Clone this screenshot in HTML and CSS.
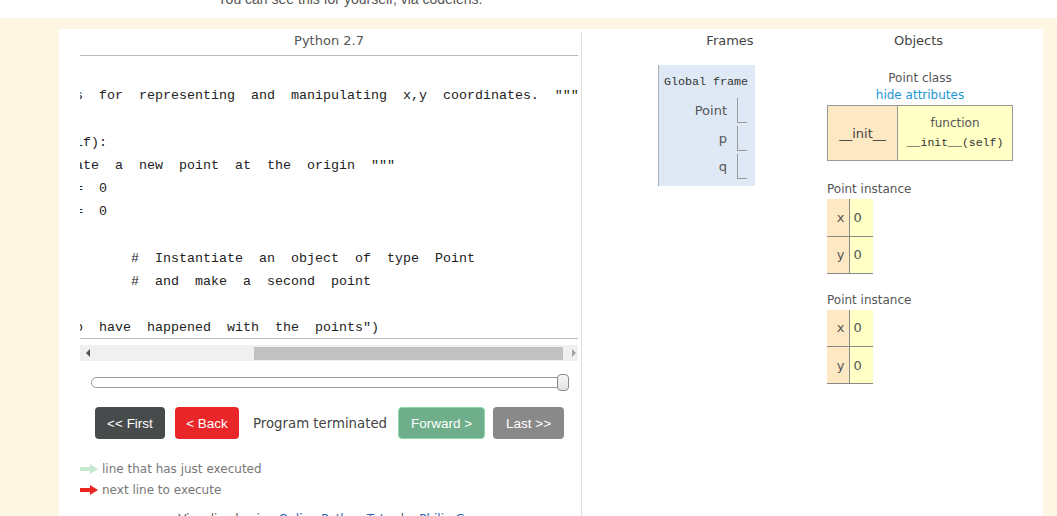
FILE: index.html
```html
<!DOCTYPE html>
<html>
<head>
<meta charset="utf-8">
<link rel="stylesheet" href="styles.css">
</head>
<body>
<div class="intro"><p>You can see this for yourself, via codelens.</p></div>
<div class="page">
  <div class="code-pane">
    <div class="lang">Python 2.7</div>
    <div class="code"><pre>class Point:
    """ Point class for representing and manipulating x,y coordinates. """

    def __init__(self):
        """ Create a new point at the origin """
        self.x = 0
        self.y = 0

p = Point()         # Instantiate an object of type Point
q = Point()         # and make a second point

print("Nothing seems to have happened with the points")</pre></div>
    <div class="hscroll"><span class="arr-l"></span><span class="thumb"></span><span class="arr-r"></span></div>
    <div class="slider"><div class="track"></div><div class="handle"></div></div>
    <div class="controls">
      <span class="btn first">&lt;&lt; First</span>
      <span class="btn back">&lt; Back</span>
      <span class="status">Program terminated</span>
      <span class="btn forward">Forward &gt;</span>
      <span class="btn last">Last &gt;&gt;</span>
    </div>
    <div class="legend">
      <div class="legend-row"><svg width="18" height="10" viewBox="0 0 18 10"><rect x="0" y="3" width="11" height="4" fill="#c3e8cf"/><polygon points="10,0 18,5 10,10" fill="#c3e8cf"/></svg><span>line that has just executed</span></div>
      <div class="legend-row"><svg width="18" height="10" viewBox="0 0 18 10"><rect x="0" y="3" width="11" height="4" fill="#e9261f"/><polygon points="10,0 18,5 10,10" fill="#e9261f"/></svg><span>next line to execute</span></div>
    </div>
    <div class="footer">Visualized using <a href="#">Online Python Tutor</a> by <a href="#">Philip Guo</a></div>
  </div>
  <div class="data-pane">
    <div class="stack">
      <div class="col-head">Frames</div>
      <div class="frame">
        <div class="frame-title">Global frame</div>
        <div class="vars">
          <div class="vname">Point</div><div class="vval"></div>
          <div class="vname">p</div><div class="vval"></div>
          <div class="vname">q</div><div class="vval"></div>
        </div>
      </div>
    </div>
    <div class="heap">
      <div class="col-head">Objects</div>
      <div class="obj-label class-label">Point class</div>
      <a class="hide" href="#">hide attributes</a>
      <table class="class-tbl">
        <tr><td class="ckey">__init__</td><td class="cval"><div class="fn">function</div><div class="sig">__init__(self)</div></td></tr>
      </table>
      <div class="obj-label inst-label">Point instance</div>
      <table class="inst-tbl">
        <tr><td class="ikey">x</td><td class="ival">0</td></tr>
        <tr><td class="ikey">y</td><td class="ival">0</td></tr>
      </table>
      <div class="obj-label inst-label second">Point instance</div>
      <table class="inst-tbl">
        <tr><td class="ikey">x</td><td class="ival">0</td></tr>
        <tr><td class="ikey">y</td><td class="ival">0</td></tr>
      </table>
    </div>
  </div>
</div>
</body>
</html>
```

FILE: styles.css
```css
* { box-sizing: border-box; }

body {
  margin: 0;
  background: #fdf6e3;
  font-family: "DejaVu Sans", sans-serif;
  color: #444;
  height: 516px;
  overflow: hidden;
}

.intro {
  height: 18px;
  background: #fff;
  overflow: hidden;
}

.intro p {
  width: 700px;
  margin: -9px 0 0;
  text-align: center;
  font: 14px/16px "Liberation Sans", Arial, sans-serif;
  color: #555;
}

.page {
  margin: 11px 14px 0 59px;
  background: #fff;
  height: 487px;
  display: flex;
  overflow: hidden;
}

/* ---------- code pane ---------- */
.code-pane {
  width: 523px;
  margin-top: 4px;
  padding: 0 3px 0 21px;
  border-right: 1px solid #ddd;
}

.lang {
  height: 23px;
  padding-top: 1px;
  line-height: 14px;
  text-align: center;
  font-size: 13px;
  color: #555;
  border-bottom: 1px solid #bbb;
}

.code {
  height: 283px;
  padding-top: 5px;
  border-bottom: 1px solid #bbb;
  overflow: hidden;
}

.code pre {
  margin: 0;
  font: 13.333px/23.2px "Liberation Mono", monospace;
  word-spacing: 8px;
  color: #222;
  transform: translateX(-197px);
}

.hscroll {
  margin-top: 6px;
  height: 16px;
  background: #f0f0f0;
  display: flex;
  align-items: center;
  padding-left: 6px;
}

.arr-l {
  width: 0;
  height: 0;
  border-right: 4px solid #505050;
  border-top: 4px solid transparent;
  border-bottom: 4px solid transparent;
}

.thumb {
  margin-left: 164px;
  width: 309px;
  height: 13px;
  background: #c1c1c1;
}

.arr-r {
  margin-left: 9px;
  width: 0;
  height: 0;
  border-left: 4px solid #a3a3a3;
  border-top: 4px solid transparent;
  border-bottom: 4px solid transparent;
}

.slider {
  margin-top: 13px;
  height: 17px;
  position: relative;
  padding-top: 3px;
}

.track {
  margin-left: 11px;
  width: 477px;
  height: 11px;
  border: 1px solid #9a9a9a;
  border-radius: 6px;
  background: #fff;
}

.handle {
  position: absolute;
  left: 477px;
  top: 0;
  width: 12px;
  height: 17px;
  border: 1px solid #8a8a8a;
  border-radius: 4px;
  background: linear-gradient(#f6f6f6, #e2e2e2);
}

.controls {
  margin-top: 16px;
  height: 32px;
  display: flex;
  align-items: center;
  padding-left: 15px;
}

.btn {
  height: 32px;
  border-radius: 4px;
  color: #fff;
  font: 13.5px "Liberation Sans", Arial, sans-serif;
  display: flex;
  align-items: center;
  justify-content: center;
}

.first { width: 70px; background: #474b4c; }
.back { width: 64px; margin-left: 10px; background: #e9272a; }
.status { margin-left: 14px; font-size: 13.3px; color: #444; }
.forward { width: 87px; margin-left: 11px; background: #6fae8a; border: 1px solid #8fd8ab; }
.last { width: 71px; margin-left: 8px; background: #898989; }

.legend {
  margin-top: 19px;
  font-size: 12px;
  color: #777;
}

.legend-row {
  height: 21px;
  display: flex;
  align-items: center;
  gap: 4px;
}

.footer {
  margin-top: 11px;
  text-align: center;
  font-size: 12px;
  line-height: 16px;
  color: #555;
}

.footer a { color: #2a62b0; text-decoration: none; }

/* ---------- data pane ---------- */
.data-pane {
  display: flex;
  padding-left: 76px;
}

.stack { width: 144px; }
.heap { width: 186px; margin-left: 25px; }

.col-head {
  margin-top: 5px;
  height: 14px;
  line-height: 14px;
  text-align: center;
  font-size: 13px;
  color: #444;
}

.heap .col-head { padding-right: 3px; }

.frame {
  margin-top: 17px;
  width: 97px;
  background: #dfe9f5;
  border-left: 1px solid #a6b3b6;
  padding: 10px 8px 7px 0;
}

.frame-title {
  padding-left: 5px;
  font: 11.667px/14px "Liberation Mono", monospace;
  color: #333;
  white-space: nowrap;
}

.vars {
  margin-top: 9px;
  display: grid;
  grid-template-columns: 68px 10px;
  column-gap: 10px;
  row-gap: 3px;
}

.vname {
  height: 25px;
  line-height: 25px;
  text-align: right;
  font-size: 13px;
  color: #555;
}

.vval {
  height: 25px;
  border-left: 1px solid #999;
  border-bottom: 1px solid #999;
}

.obj-label {
  line-height: 17px;
  font-size: 12px;
  color: #555;
}

.class-label {
  margin-top: 22px;
  text-align: center;
}

.hide {
  display: block;
  text-align: center;
  color: #1b98d5;
  text-decoration: none;
  font-size: 12px;
  line-height: 17px;
}

.class-tbl {
  margin-top: 1px;
  border-collapse: collapse;
  width: 186px;
}

.class-tbl td {
  border: 1px solid #999;
  height: 55px;
  padding: 0;
}

.ckey {
  width: 70px;
  background: #fde8c4;
  text-align: center;
  font-size: 13px;
  color: #444;
}

.cval {
  background: #ffffc6;
  text-align: center;
}

.fn { font-size: 12px; color: #555; line-height: 20px; }
.sig { font: 11.5px/20px "Liberation Mono", monospace; color: #333; }

.inst-label { margin-top: 20px; }
.inst-label.second { margin-top: 18px; }

.inst-tbl {
  margin-top: 1px;
  border-collapse: collapse;
}

.inst-tbl td {
  height: 37px;
  padding: 0;
  border-bottom: 1px solid #888;
  font-size: 13px;
  color: #555;
}

.ikey {
  width: 22px;
  background: #fde8c4;
  text-align: right;
  padding-right: 4px !important;
  border-right: 1px solid #888;
}

.ival {
  width: 24px;
  background: #ffffc6;
  padding-left: 4px !important;
}
```
